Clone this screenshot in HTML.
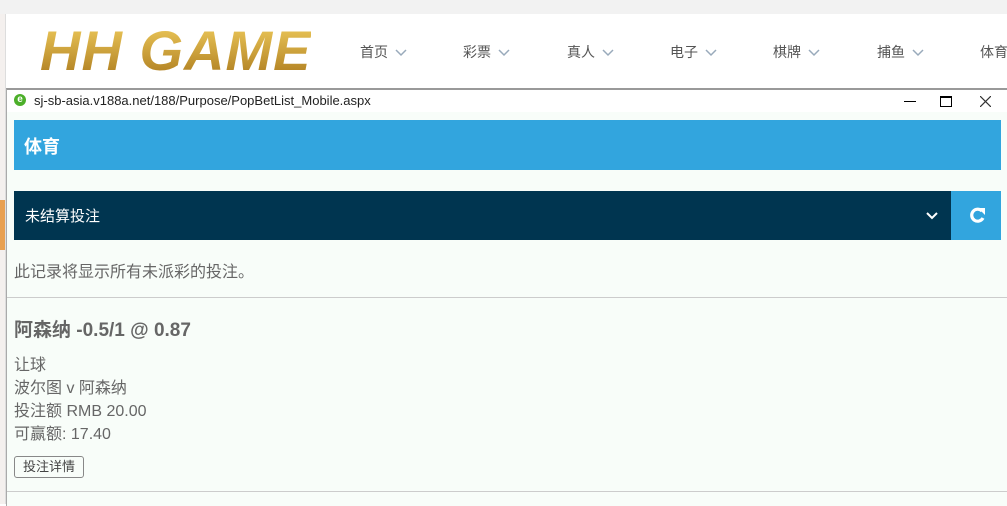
<!DOCTYPE html>
<html><head><meta charset="utf-8"><style>
body{margin:0;width:1007px;height:504px;overflow:hidden;position:relative;background:#fff;font-family:"Liberation Sans","Noto Sans CJK SC",sans-serif}
.a{position:absolute;white-space:nowrap}
.nav{top:42px;font-size:14px;color:#555}
.nav svg{margin-left:7px;vertical-align:middle}
.t{color:#666;font-size:16px;left:14px}
</style></head><body>
<div class="a" style="left:0;top:0;width:1007px;height:14px;background:#f2f2f2"></div>
<div class="a" style="left:0;top:14px;width:5px;height:490px;background:#f4f0ee;border-right:1px solid #ddd"></div>
<div class="a" style="left:0;top:200px;width:5px;height:50px;background:#e8a050"></div>
<div class="a" style="left:40px;top:18px;font:italic bold 56px 'Liberation Sans',sans-serif;letter-spacing:1px;background:linear-gradient(#f3d060,#a8761a);-webkit-background-clip:text;color:transparent">HH GAME</div>
<div class="a nav" style="left:360px">首页<svg width="12" height="8"><path d="M1 1l5 5 5-5" stroke="#9ab" stroke-width="1.5" fill="none"/></svg></div>
<div class="a nav" style="left:463px">彩票<svg width="12" height="8"><path d="M1 1l5 5 5-5" stroke="#9ab" stroke-width="1.5" fill="none"/></svg></div>
<div class="a nav" style="left:567px">真人<svg width="12" height="8"><path d="M1 1l5 5 5-5" stroke="#9ab" stroke-width="1.5" fill="none"/></svg></div>
<div class="a nav" style="left:670px">电子<svg width="12" height="8"><path d="M1 1l5 5 5-5" stroke="#9ab" stroke-width="1.5" fill="none"/></svg></div>
<div class="a nav" style="left:773px">棋牌<svg width="12" height="8"><path d="M1 1l5 5 5-5" stroke="#9ab" stroke-width="1.5" fill="none"/></svg></div>
<div class="a nav" style="left:877px">捕鱼<svg width="12" height="8"><path d="M1 1l5 5 5-5" stroke="#9ab" stroke-width="1.5" fill="none"/></svg></div>
<div class="a nav" style="left:980px">体育</div>
<div class="a" style="left:6px;top:88px;width:1001px;height:416px;background:#f8fdf9;border-top:2px solid #999;border-left:1px solid #aaa"></div>
<div class="a" style="left:7px;top:90px;width:1000px;height:22px;background:#fff"></div>
<div class="a" style="left:14px;top:94px;width:12px;height:12px;border-radius:50%;background:#4caf2a;color:#fff;font-size:10px;line-height:12px;text-align:center;font-weight:bold">e</div>
<div class="a" style="left:34px;top:93px;font-size:13px;color:#222">sj-sb-asia.v188a.net/188/Purpose/PopBetList_Mobile.aspx</div>
<div class="a" style="left:904px;top:101px;width:12px;height:1px;background:#000"></div>
<div class="a" style="left:940px;top:96px;width:10px;height:8px;border:1px solid #000;border-top-width:2px"></div>
<svg class="a" style="left:980px;top:96px" width="11" height="11"><path d="M0 0l11 11M11 0L0 11" stroke="#333" stroke-width="1.2"/></svg>
<div class="a" style="left:14px;top:120px;width:987px;height:50px;background:#32a5de"></div>
<div class="a" style="left:24px;top:133px;font-size:18px;font-weight:bold;color:#fff">体育</div>
<div class="a" style="left:14px;top:191px;width:937px;height:49px;background:#003550"></div>
<div class="a" style="left:951px;top:191px;width:50px;height:49px;background:#32a5de"></div>
<div class="a" style="left:25px;top:205px;font-size:15px;color:#fff">未结算投注</div>
<svg class="a" style="left:926px;top:211px" width="12" height="10"><path d="M1 2l5 5 5-5" stroke="#fff" stroke-width="2" fill="none"/></svg>
<svg class="a" style="left:968px;top:206px" width="18" height="18"><path d="M14 5A6 6 0 1 0 15 12" stroke="#fff" stroke-width="3.2" fill="none"/><path d="M10 2h7v7z" fill="#fff"/></svg>
<div class="a t" style="top:258px">此记录将显示所有未派彩的投注。</div>
<div class="a" style="left:7px;top:297px;width:1000px;height:1px;background:#ccc"></div>
<div class="a" style="left:14px;top:315px;font-size:19px;font-weight:bold;color:#666">阿森纳 -0.5/1 @ 0.87</div>
<div class="a t" style="top:351px">让球</div>
<div class="a t" style="top:374px">波尔图 v 阿森纳</div>
<div class="a t" style="top:397px">投注额 RMB 20.00</div>
<div class="a t" style="top:420px">可赢额: 17.40</div>
<div class="a" style="left:14px;top:456px;width:68px;height:20px;border:1px solid #888;border-radius:3px;font-size:13px;color:#444;text-align:center;line-height:20px">投注详情</div>
<div class="a" style="left:7px;top:491px;width:1000px;height:1px;background:#ccc"></div>
</body></html>
